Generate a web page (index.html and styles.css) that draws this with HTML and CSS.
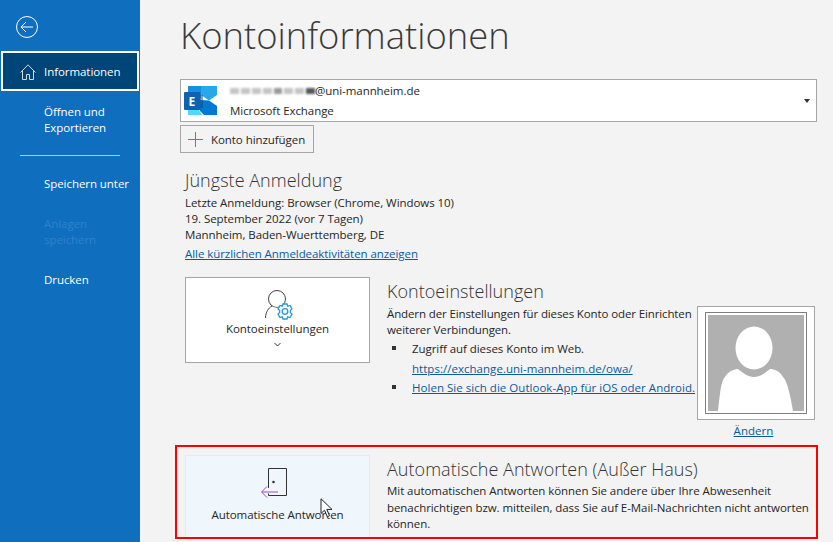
FILE: index.html
```html
<!DOCTYPE html>
<html lang="de">
<head>
<meta charset="utf-8">
<title>Kontoinformationen</title>
<link rel="stylesheet" href="styles.css">
</head>
<body>
<div class="app">
  <nav class="side">
    <div class="back">
      <svg width="24" height="24" viewBox="0 0 24 24" fill="none" stroke="#fff" stroke-width="1"><circle cx="12" cy="12" r="10.500"/><path d="M6 12h12M11 7l-5 5 5 5"/></svg>
    </div>
    <div class="nav-item active">
      <svg class="home" width="16" height="16" viewBox="0 0 16 16" fill="none" stroke="#d8d8d8" stroke-width="1"><path d="M.5 8.500 8 .8l7.500 7.700M2.500 6.500v9h4v-5h3v5h4v-9"/></svg>
      <span>Informationen</span>
    </div>
    <div class="nav-item two">Öffnen und<br>Exportieren</div>
    <div class="sep"></div>
    <div class="nav-item one">Speichern unter</div>
    <div class="nav-item two disabled">Anlagen<br>speichern</div>
    <div class="nav-item one">Drucken</div>
  </nav>
  <main class="main">
    <h1 class="title">Kontoinformationen</h1>
    <div class="account">
      <svg class="exch" width="33" height="29" viewBox="0 0 33 29"><path fill="#28a8ea" d="M17 0h16v9l-8 5.500-8-5.500z"/><path fill="#0078d4" d="M25 14.500l8 5.500v9H20l-4-4V14z"/><path fill="#1490df" d="M4 0h13v9l-1 5H4z"/><path fill="#50d9ff" d="M4 21h9l5 8H4z"/><path fill="#14447d" opacity=".5" d="M16 9h3v13h-3z"/><rect y="6" width="16.500" height="18" rx="1" fill="#0f62b0"/><text x="4.500" y="19.500" class="exch-e">E</text></svg>
      <div class="acc-text">
        <div class="acc-mail"><span class="blur"><i></i><i></i><i></i><i></i><i></i><i></i><i></i><i></i></span>@uni-mannheim.de</div>
        <div class="acc-type">Microsoft Exchange</div>
      </div>
      <span class="caret"></span>
    </div>
    <button class="add"><svg width="15" height="15" viewBox="0 0 15 15"><path class="plus" d="M7.500 0v15M0 7.500h15"/></svg><span>Konto hinzufügen</span></button>
    <section class="login">
      <h2 class="head">Jüngste Anmeldung</h2>
      <p>Letzte Anmeldung: Browser (Chrome, Windows 10)</p>
      <p>19. September 2022 (vor 7 Tagen)</p>
      <p>Mannheim, Baden-Wuerttemberg, DE</p>
      <a class="link all">Alle kürzlichen Anmeldeaktivitäten anzeigen</a>
    </section>
    <section class="row settings">
      <div class="card">
        <svg class="card-icon" width="36" height="36" viewBox="0 0 36 36" fill="none"><circle cx="17" cy="13" r="8.500" stroke="#444"/><path d="M6 32c0-5 3-9 6-11 3 1 7 1 10 0v11z" fill="#fff"/><path d="M5.500 32c0-6 3-10 6.500-12" stroke="#444"/><path fill="#fff" stroke="#2b95d8" stroke-width="1.300" d="M23 18h4l.7 2.200 2.300-.7 2 3.500-1.700 1.600.1.900-.1.900L32 28l-2 3.500-2.300-.7L27 33h-4l-.7-2.200-2.300.7-2-3.500 1.700-1.600-.1-.9.100-.9L18 23l2-3.500 2.300.7z"/><circle cx="25" cy="25.500" r="2.800" stroke="#2b95d8" stroke-width="1.300"/></svg>
        <div class="card-label">Kontoeinstellungen</div>
        <svg class="chev" width="7" height="5" viewBox="0 0 7 5" fill="none" stroke="#333"><path d="M.5 1l3 3 3-3"/></svg>
      </div>
      <div class="body">
        <h2 class="head">Kontoeinstellungen</h2>
        <p>Ändern der Einstellungen für dieses Konto oder Einrichten<br>weiterer Verbindungen.</p>
        <ul>
          <li>Zugriff auf dieses Konto im Web.<br><a class="link">https://exchange.uni-mannheim.de/owa/</a></li>
          <li><a class="link">Holen Sie sich die Outlook-App für iOS oder Android.</a></li>
        </ul>
      </div>
      <div class="photo-col">
        <div class="photo"><div class="photo-in"><svg width="96" height="96" viewBox="0 0 96 96"><rect width="96" height="96" fill="#b0b0b0"/><ellipse cx="46" cy="33" rx="18.500" ry="21.500" fill="#fff"/><path fill="#fff" d="M10 96C12 78 13 66 17 62 20 56 27 54 30 54 35 58 40 62 46 62S57 58 62 54C66 54 72 56 75 62 79 66 82 78 85 96z"/></svg></div></div>
        <a class="link change">Ändern</a>
      </div>
    </section>
    <section class="row auto">
      <div class="card hover">
        <svg class="card-icon door" width="41" height="40" viewBox="0 0 41 40" fill="none"><path d="M11.500 24V4.500h18v27h-18v-2" stroke="#333"/><circle cx="16.500" cy="18" r="1.300" fill="#333"/><path d="M21 28H5M10 22.500 4.500 28l5.500 5.500" stroke="#b146c2"/></svg>
        <div class="card-label">Automatische Antworten</div>
        <svg class="cursor" width="14" height="20" viewBox="0 0 14 20"><path d="M1 .8v14.700l3.500-3.300 2.800 6.500 2.200-1-2.700-6.300H12z" fill="#fff" stroke="#222"/></svg>
      </div>
      <div class="body">
        <h2 class="head">Automatische Antworten (Außer Haus)</h2>
        <p>Mit automatischen Antworten können Sie andere über Ihre Abwesenheit<br>benachrichtigen bzw. mitteilen, dass Sie auf E-Mail-Nachrichten nicht antworten<br>können.</p>
      </div>
    </section>
  </main>
</div>
</body>
</html>
```
FILE: styles.css
```css
* { box-sizing: border-box; }
html, body { margin: 0; height: 100%; overflow: hidden; }
body { font: 11.5px/16px "Open Sans", "Noto Sans", sans-serif; letter-spacing: -.06px; color: #262626; background: #f3f3f3; }
p, h1, h2, ul { margin: 0; padding: 0; }
.app { display: flex; height: 542px; overflow: hidden; }
.side { width: 140px; flex: none; background: #106ebe; color: #fff; }
.back { height: 51px; padding: 15px 0 0 15px; }
.nav-item { padding-left: 44px; }
.active { height: 40px; margin: 0 1px; padding-left: 17px; padding-top: 2px; display: flex; align-items: center; gap: 8px; background: #004578; border: 2px solid #fff; }
.home { flex: none; margin-top: -1px; }
.two { margin-top: 13px; }
.sep { width: 100px; height: 1px; margin: 19px 0 0 20px; background: #a6d0f2; }
.one { margin-top: 20px; }
.disabled { color: #2f82cc; margin-top: 24px; }
.side .nav-item.one:last-child { margin-top: 24px; }
.main { flex: 1; min-width: 0; padding: 0 0 0 40px; }
.title { font-size: 36.400px; line-height: 48px; font-weight: 300; letter-spacing: 0; padding: 11px 0 0; color: #3a3a3a; height: 79px; }
.account { width: 637px; height: 43px; background: #fff; border: 1px solid #a6a6a6; display: flex; align-items: center; position: relative; padding-left: 3px; }
.exch { flex: none; }
.exch-e { font: 700 12px "Open Sans", sans-serif; fill: #fff; }
.acc-text { margin-left: 13px; }
.acc-mail { display: flex; align-items: center; height: 20px; }
.acc-type { height: 20px; line-height: 20px; }
.blur { display: inline-flex; align-items: center; width: 85px; height: 10px; gap: 2px; filter: blur(1px); }
.blur i { flex: 1; height: 6px; background: #c4c4c4; }
.blur i:nth-child(5) { background: #9a9a9a; }
.blur i:nth-child(8) { background: #555; }
.caret { position: absolute; right: 6px; top: 19px; border: 3.500px solid transparent; border-top: 4px solid #333; border-bottom: 0; }
.add { display: flex; align-items: center; gap: 8px; width: 134px; height: 28px; margin-top: 3px; padding: 0 0 0 7px; background: #f3f3f3; border: 1px solid #a6a6a6; font: inherit; letter-spacing: inherit; color: inherit; }
.add svg { flex: none; }
.add span { padding-top: 2px; }
.plus { stroke: #1fae4b; stroke-width: 1; fill: none; }
.login { padding: 15px 0 0 5px; }
.head { font-size: 18px; line-height: 24px; font-weight: 300; letter-spacing: .03px; color: #333; }
.login p:first-of-type { margin-top: 3px; }
.link { color: #0b5a9e; text-decoration: underline; }
.all { display: block; margin-top: 3px; }
.row { display: flex; }
.settings { margin: 15px 0 0 5px; height: 168px; }
.card { width: 185px; height: 86px; flex: none; background: #fff; border: 1px solid #a6a6a6; display: flex; flex-direction: column; align-items: center; position: relative; padding-top: 8px; }
.card-icon { flex: none; margin-bottom: -1px; }
.card-label { font-weight: 500; }
.chev { margin-top: 5px; }
.body { margin-left: 17px; flex: none; width: 310px; white-space: nowrap; }
.row .body .head { margin-top: 2px; }
.settings .body p { margin-top: 3px; letter-spacing: -.12px; }
.settings .link { letter-spacing: .03px; }
.body ul { list-style: none; margin-top: 1px; }
.body li { position: relative; padding-left: 25px; line-height: 19.500px; }
.body li::before { content: ""; position: absolute; left: 5px; top: 7px; width: 4px; height: 4px; background: #333; }
.photo-col { display: flex; flex-direction: column; align-items: center; margin-top: 29px; }
.photo { width: 118px; height: 114px; background: #fff; border: 1px solid #a6a6a6; padding: 5px 7px; }
.photo-in { height: 102px; border: 1px solid #7f7f7f; padding: 2px; overflow: hidden; }
.photo-in svg { display: block; }
.change { margin: 3px 5px 0 0; }
.auto { padding: 8px 0 0 8px; position: relative; height: 94px; width: 643px; margin-left: -5px; border: 2px solid #f00; }
.hover { background: #eff6fc; border-color: #deecf9; border-bottom: 0; height: 82px; padding-top: 8px; }
.door { margin-bottom: 3px; }
.cursor { position: absolute; left: 134px; top: 42px; }
.auto .body { width: 440px; }
.auto .body p { margin-top: 2px; line-height: 16.500px; }
```
